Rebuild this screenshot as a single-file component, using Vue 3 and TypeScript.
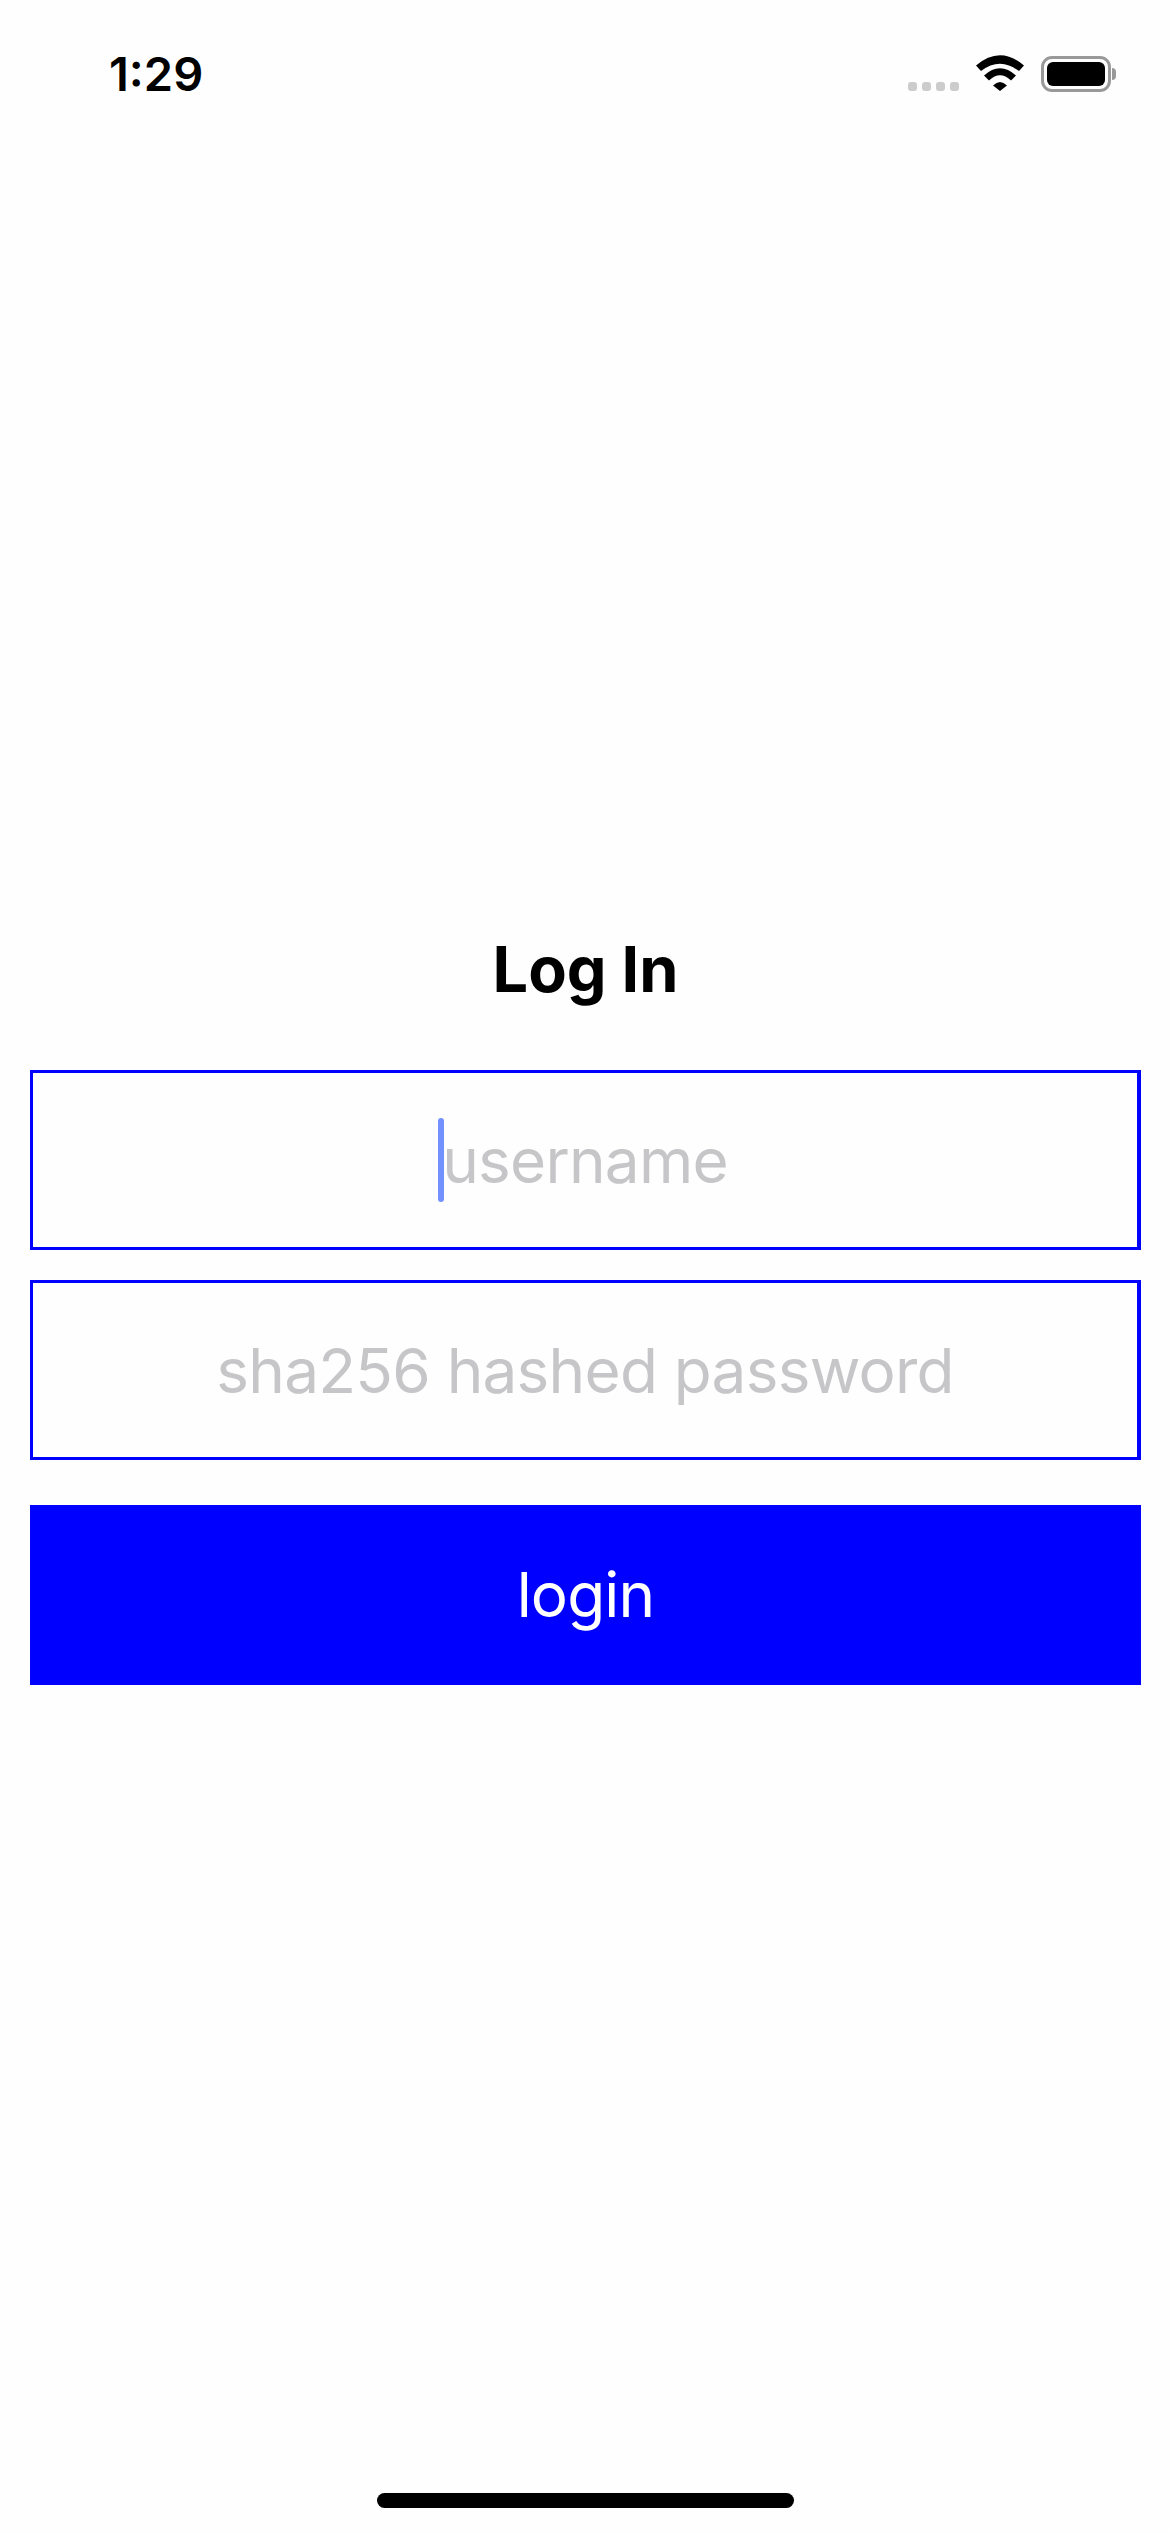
<script setup lang="ts">
const dots: number[] = [1, 2, 3, 4]
</script>

<template>
  <div class="screen">
    <header class="status">
      <span class="time">1:29</span>
      <div class="indicators">
        <div class="signal">
          <i v-for="d in dots" :key="d" class="dot"></i>
        </div>
        <svg class="wifi" width="48" height="36" viewBox="0 0 48 36">
          <path d="M0 10.5Q24 -10 48 10.5L43 16Q24 1.5 5 16Z" />
          <path d="M8 20.5Q24 6 40 20.5L35 25.5Q24 15 13 25.5Z" />
          <path d="M17 30.5Q24 23.5 31 30.5L24 36Z" />
        </svg>
        <div class="battery">
          <div class="battery-body"><div class="battery-fill"></div></div>
          <div class="battery-nub"></div>
        </div>
      </div>
    </header>

    <main class="form">
      <h1 class="title">Log In</h1>
      <div class="field">
        <span class="placeholder has-caret"><i class="caret"></i>username</span>
      </div>
      <div class="field second">
        <span class="placeholder">sha256 hashed password</span>
      </div>
      <button class="login" type="button">login</button>
    </main>

    <div class="home"></div>
  </div>
</template>

<style scoped>
.screen {
  width: 1170px;
  height: 2532px;
  display: flex;
  flex-direction: column;
  background: #fefefe;
  font-family: Inter, "Liberation Sans", sans-serif;
  overflow: hidden;
}
.status {
  height: 132px;
  display: flex;
  justify-content: space-between;
  align-items: flex-start;
  padding: 0 54px 0 109px;
  box-sizing: border-box;
}
.time {
  margin-top: 47px;
  font-size: 47px;
  line-height: 54px;
  font-weight: 600;
  color: #000;
}
.indicators {
  display: flex;
  align-items: flex-start;
  margin-top: 55px;
}
.signal {
  display: flex;
  gap: 5px;
  margin-top: 27px;
  margin-right: 17px;
}
.dot {
  width: 9px;
  height: 9px;
  border-radius: 3px;
  background: #cccccc;
}
.wifi {
  margin-right: 17px;
  fill: #000;
}
.battery {
  display: flex;
  align-items: center;
  margin-top: 1px;
}
.battery-body {
  width: 70px;
  height: 36px;
  box-sizing: border-box;
  border: 3px solid #999999;
  border-radius: 11px;
  padding: 3px;
}
.battery-fill {
  width: 100%;
  height: 100%;
  background: #000;
  border-radius: 6px;
}
.battery-nub {
  width: 4px;
  height: 12px;
  margin-left: 1px;
  background: #999999;
  border-radius: 0 6px 6px 0;
}
.form {
  display: flex;
  flex-direction: column;
  padding: 0 29px 0 30px;
  margin-top: 796px;
}
.title {
  margin: 0;
  height: 142px;
  font-size: 63px;
  line-height: 82px;
  font-weight: 700;
  text-align: center;
  color: #000;
}
.field {
  height: 180px;
  box-sizing: border-box;
  border-style: solid;
  border-color: #0000ff;
  border-width: 3px 4px 3px 3px;
  padding-top: 2px;
  display: flex;
  align-items: center;
  justify-content: center;
}
.second {
  margin-top: 30px;
}
.placeholder {
  position: relative;
  font-size: 62px;
  letter-spacing: -0.75px;
  line-height: 72px;
  color: #c6c6c8;
}
.caret {
  position: absolute;
  left: -4px;
  top: -7px;
  width: 6px;
  height: 84px;
  border-radius: 3px;
  background: #7390ff;
}
.login {
  margin-top: 45px;
  height: 180px;
  padding: 0;
  border: 0;
  background: #0000ff;
  color: #ffffff;
  font-family: inherit;
  font-size: 62px;
  letter-spacing: -0.85px;
  line-height: 72px;
}
.home {
  width: 417px;
  height: 15px;
  margin: auto auto 24px;
  border-radius: 8px;
  background: #000;
}
</style>
